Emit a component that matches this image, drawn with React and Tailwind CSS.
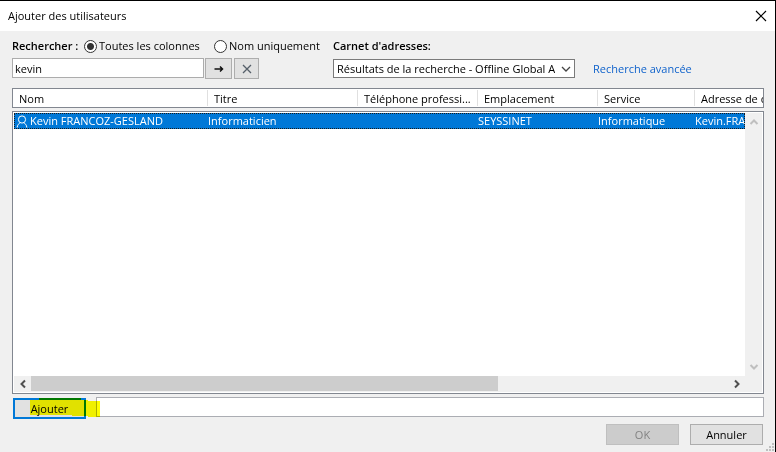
import { useState } from 'react';

const FONT = "font-['Open_Sans','Noto_Sans',sans-serif]";

const columns = ['Nom', 'Titre', 'Téléphone professi...', 'Emplacement', 'Service', 'Adresse de courrier'];

const users = [
    {
        name: 'Kevin FRANCOZ-GESLAND',
        title: 'Informaticien',
        phone: '',
        location: 'SEYSSINET',
        service: 'Informatique',
        email: 'Kevin.FRANCOZ',
    },
];

const Chevron = ({ d, className }) => (
    <svg viewBox="0 0 10 10" className={`w-[10px] h-[10px] ${className}`} fill="none" stroke="currentColor" aria-hidden="true">
        <path d={d} />
    </svg>
);

const PersonIcon = () => (
    <svg viewBox="0 0 12 14" className="w-3 h-[14px] shrink-0" fill="none" stroke="currentColor" aria-hidden="true">
        <circle cx="6" cy="5.5" r="3.6" />
        <path d="M1.2 13.5C1.4 10.8 2.8 9.4 4.4 8.8M10.8 13.5C10.6 10.8 9.2 9.4 7.6 8.8" />
    </svg>
);

const Columns = ({ first }) => (
    <colgroup>
        <col className={first} />
        <col className="w-[150px]" />
        <col className="w-[120px]" />
        <col className="w-[120px]" />
        <col className="w-[97px]" />
        <col />
    </colgroup>
);

const RadioOption = ({ label, checked, onChange }) => (
    <label className="flex items-center gap-[2px] whitespace-nowrap">
        <input
            type="radio"
            name="scope"
            checked={checked}
            onChange={onChange}
            className="appearance-none w-[13px] h-[13px] rounded-full border border-[#333] bg-white checked:bg-[radial-gradient(circle,#333_3px,#fff_4px)]"
        />
        {label}
    </label>
);

const SearchBar = () => {
    const [scope, setScope] = useState('all');
    const [query, setQuery] = useState('kevin');

    return (
        <div className="flex pt-2">
            <div className="w-[321px] shrink-0">
                <div className="flex items-center h-[14px]">
                    <label htmlFor="query" className="w-[72px] font-semibold whitespace-nowrap">
                        Rechercher :
                    </label>
                    <div className="flex w-[130px]">
                        <RadioOption label="Toutes les colonnes" checked={scope === 'all'} onChange={() => setScope('all')} />
                    </div>
                    <RadioOption label="Nom uniquement" checked={scope === 'name'} onChange={() => setScope('name')} />
                </div>
                <div className="flex mt-[5px]">
                    <input
                        id="query"
                        type="text"
                        value={query}
                        onChange={(e) => setQuery(e.target.value)}
                        className="w-48 h-5 px-[2px] border border-[#acacac] bg-white outline-none"
                    />
                    <button
                        type="button"
                        aria-label="Lancer la recherche"
                        className="flex items-center justify-center w-[27px] h-[21px] ml-px border border-[#adadad] bg-[#e1e1e1]"
                    >
                        <svg viewBox="0 0 10 8" className="w-[10px] h-2" fill="none" stroke="#111" strokeWidth="1.5" aria-hidden="true">
                            <path d="M0.5 4H8.5M6 1.5L8.5 4L6 6.5" />
                        </svg>
                    </button>
                    <button
                        type="button"
                        aria-label="Effacer"
                        onClick={() => setQuery('')}
                        className="flex items-center justify-center w-[25px] h-[21px] ml-[2px] border border-[#adadad] bg-[#e1e1e1] text-[#555f69]"
                    >
                        <Chevron d="M1 1L9 9M9 1L1 9" className="stroke-[1.3]" />
                    </button>
                </div>
            </div>

            <div>
                <label htmlFor="book" className="flex items-center h-[14px] font-semibold whitespace-nowrap">
                    Carnet d'adresses:
                </label>
                <div className="flex items-center gap-[18px] mt-[6px]">
                    <div className="relative w-[242px] h-[19px]">
                        <select
                            id="book"
                            className="appearance-none block w-full h-full pl-[3px] pr-[19px] border border-[#7a7a7a] bg-white outline-none overflow-hidden"
                        >
                            <option>Résultats de la recherche - Offline Global Address List</option>
                        </select>
                        <Chevron d="M1 3L5 7L9 3" className="absolute right-1 top-[5px] text-[#444] stroke-[1.3] pointer-events-none" />
                    </div>
                    <a href="#recherche" className="text-[#0f62cb] whitespace-nowrap">
                        Recherche avancée
                    </a>
                </div>
            </div>
        </div>
    );
};

const UserList = () => (
    <div className="flex flex-col flex-1 mt-[9px]">
        <div className="h-5 border border-[#828790] bg-white overflow-hidden">
            <table className="w-full table-fixed border-collapse">
                <Columns first="w-[195px]" />
                <thead>
                    <tr>
                        {columns.map((name) => (
                            <th key={name} scope="col" className="group p-0 h-[18px] font-normal text-left">
                                <div className="my-px pl-[6px] h-4 leading-[18px] border-r border-[#e0e0e0] group-last:border-r-0 whitespace-nowrap overflow-hidden">
                                    {name}
                                </div>
                            </th>
                        ))}
                    </tr>
                </thead>
            </table>
        </div>

        <div className="flex flex-col flex-1 mt-[3px] p-px border border-[#828790] bg-white">
            <div className="flex flex-1">
                <div className="flex-1 min-w-0">
                    <table className="w-full table-fixed border-collapse">
                        <Columns first="w-[194px]" />
                        <tbody>
                            {users.map((user) => (
                                <tr key={user.name} className="h-4 bg-[#0078d7] text-white outline-1 -outline-offset-1 outline-dotted outline-[#1a1a1a]">
                                    <td className="p-0">
                                        <div className="flex items-center gap-[2px] h-4 pl-[2px] leading-[14px] whitespace-nowrap">
                                            <PersonIcon />
                                            {user.name}
                                        </div>
                                    </td>
                                    {[user.title, user.phone, user.location, user.service, user.email].map((value, i) => (
                                        <td key={i} className="p-0">
                                            <div className="h-4 leading-4 whitespace-nowrap overflow-hidden">{value}</div>
                                        </td>
                                    ))}
                                </tr>
                            ))}
                        </tbody>
                    </table>
                </div>
                {/* Vertical scrollbar */}
                <div className="flex flex-col items-center justify-between w-[17px] py-1 bg-[#f0f0f0] text-[#bfbfbf]">
                    <Chevron d="M1.5 7L5 3.5L8.5 7" className="stroke-2" />
                    <Chevron d="M1.5 3L5 6.5L8.5 3" className="stroke-2" />
                </div>
            </div>
            {/* Horizontal scrollbar */}
            <div className="flex h-4 bg-[#f0f0f0] text-[#505050]">
                <div className="flex items-center justify-center w-[17px]">
                    <Chevron d="M7 1.5L3.5 5L7 8.5" className="stroke-2" />
                </div>
                <div className="flex-1">
                    <div className="w-[67%] h-[15px] bg-[#cdcdcd]" />
                </div>
                <div className="flex items-center justify-center w-[17px] mr-[17px]">
                    <Chevron d="M3 1.5L6.5 5L3 8.5" className="stroke-2" />
                </div>
            </div>
        </div>
    </div>
);

const Footer = () => (
    <>
        <div className="relative flex mt-[3px]">
            <button type="button" className="w-[73px] h-[21px] mt-px ml-px border-2 border-[#0078d7] bg-[#e1e1e1]">
                Ajouter
            </button>
            <input
                type="text"
                aria-label="Utilisateurs à ajouter"
                className="flex-1 min-w-0 h-5 ml-[10px] px-1 border border-[#abadb3] bg-white outline-none"
            />
            {/* Highlighter stroke */}
            <svg viewBox="0 0 90 22" className="absolute left-0 top-0 w-[90px] h-[22px] mix-blend-multiply pointer-events-none" aria-hidden="true">
                <path d="M18 3H27V1H69V3H76V4H88V20H76V19H60V18H18Z" fill="#ffff00" />
            </svg>
        </div>
        <div className="flex justify-end gap-[11px] mt-[5px] pr-px">
            <button type="button" disabled className="w-[73px] h-[21px] border border-[#bfbfbf] bg-[#cccccc] text-[#838383]">
                OK
            </button>
            <button type="button" className="w-[73px] h-[21px] border border-[#adadad] bg-[#e1e1e1]">
                Annuler
            </button>
        </div>
    </>
);

export default function App() {
    return (
        <div className={`relative flex flex-col min-h-screen border-t border-r border-black bg-[#f0f0f0] text-[11px] leading-[14px] text-black ${FONT}`}>
            <header className="flex items-center justify-between h-[30px] pl-2 pr-2 bg-white">
                <h1>Ajouter des utilisateurs</h1>
                <button type="button" aria-label="Fermer">
                    <svg viewBox="0 0 12 12" className="w-3 h-3" fill="none" stroke="currentColor" strokeWidth="1.2" aria-hidden="true">
                        <path d="M1 1L11 11M11 1L1 11" />
                    </svg>
                </button>
            </header>

            <main className="flex flex-col flex-1 pl-3 pr-[11px] pb-[7px]">
                <SearchBar />
                <UserList />
                <Footer />
            </main>

            {/* Resize grip */}
            <svg viewBox="0 0 8 8" className="absolute right-px bottom-px w-2 h-2" fill="#bfbfbf" aria-hidden="true">
                <path d="M6 0h2v2h-2zM3 3h2v2h-2zM6 3h2v2h-2zM0 6h2v2h-2zM3 6h2v2h-2zM6 6h2v2h-2z" />
            </svg>
        </div>
    );
}
